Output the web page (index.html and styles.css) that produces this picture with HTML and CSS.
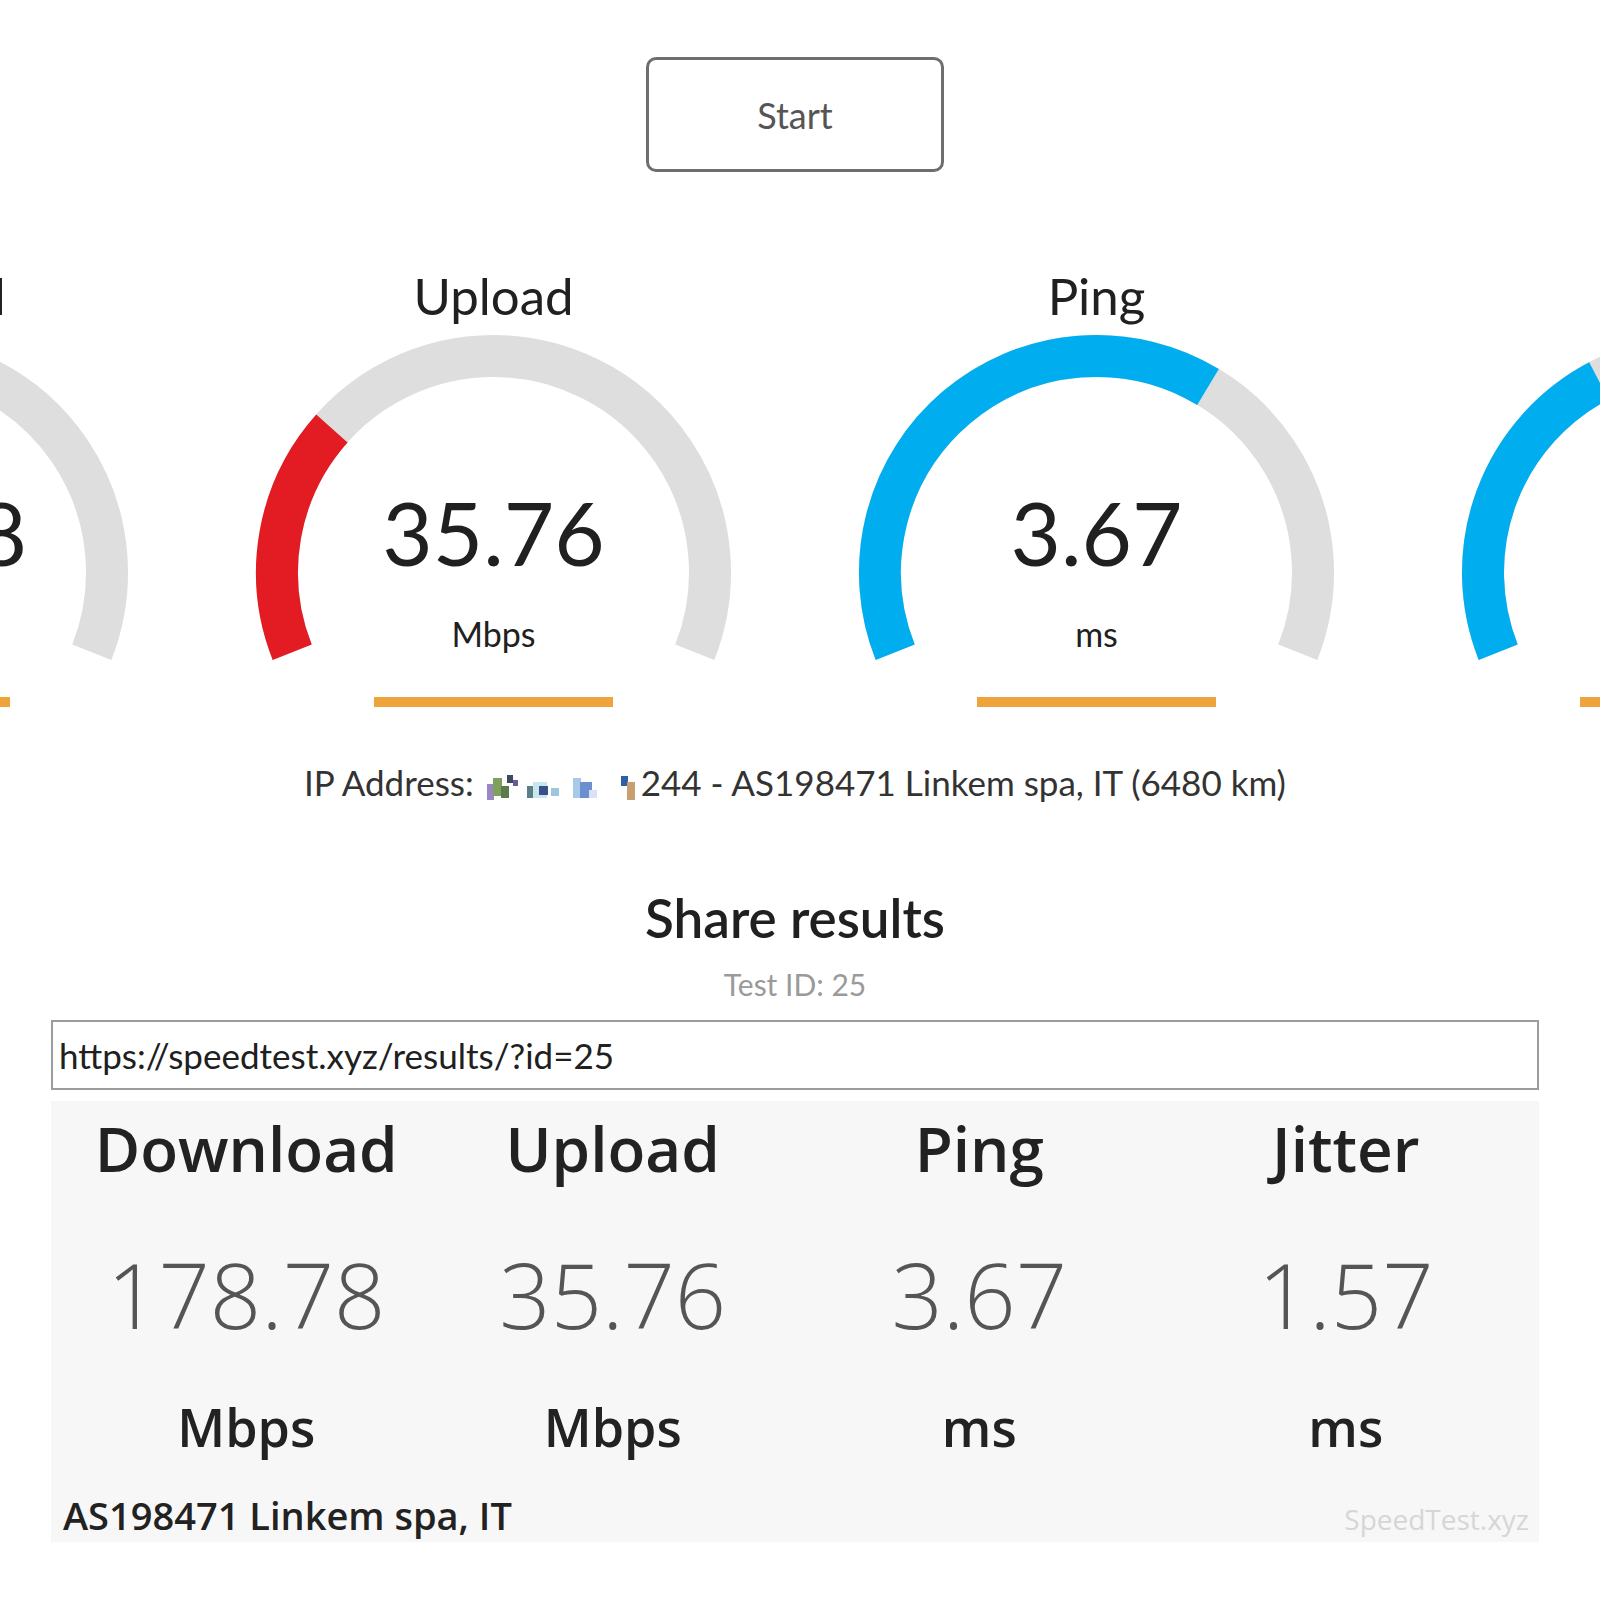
FILE: index.html
```html
<!DOCTYPE html>
<html lang="en">
<head>
    <meta charset="UTF-8">
    <meta name="viewport" content="width=device-width, initial-scale=1.0">
    <title>SpeedTest.xyz</title>
    <link rel="stylesheet" href="styles.css">
</head>
<body>
    <div class="page">
        <div class="start-row">
            <button class="start-button" aria-label="Start test">Start</button>
        </div>

        <!-- meters: wider than the page, overflow on both sides -->
        <div class="meters">
            <div class="meter-box">
                <div class="meter-label">Download</div>
                <div class="meter">
                    <svg class="meter-svg" width="603" height="390" viewBox="0 0 603 390">
                        <path class="arc-bg" d="M 100.2 326.2 A 216.5 216.5 0 1 1 502.8 326.2"/>
                        <path class="arc-blue" d="M 100.2 326.2 A 216.5 216.5 0 0 1 343.4 34.1"/>
                        <rect class="meter-progress" x="182" y="371" width="239" height="10"/>
                    </svg>
                    <div class="meter-value">178.78</div>
                    <div class="meter-unit">Mbps</div>
                </div>
            </div>
            <div class="meter-box">
                <div class="meter-label">Upload</div>
                <div class="meter">
                    <svg class="meter-svg" width="603" height="390" viewBox="0 0 603 390">
                        <path class="arc-bg" d="M 100.2 326.2 A 216.5 216.5 0 1 1 502.8 326.2"/>
                        <path class="arc-red" d="M 100.2 326.2 A 216.5 216.5 0 0 1 139.9 102.4"/>
                        <rect class="meter-progress" x="182" y="371" width="239" height="10"/>
                    </svg>
                    <div class="meter-value">35.76</div>
                    <div class="meter-unit">Mbps</div>
                </div>
            </div>
            <div class="meter-box">
                <div class="meter-label">Ping</div>
                <div class="meter">
                    <svg class="meter-svg" width="603" height="390" viewBox="0 0 603 390">
                        <path class="arc-bg" d="M 100.2 326.2 A 216.5 216.5 0 1 1 502.8 326.2"/>
                        <path class="arc-blue" d="M 100.2 326.2 A 216.5 216.5 0 0 1 413.0 60.9"/>
                        <rect class="meter-progress" x="182" y="371" width="239" height="10"/>
                    </svg>
                    <div class="meter-value">3.67</div>
                    <div class="meter-unit">ms</div>
                </div>
            </div>
            <div class="meter-box">
                <div class="meter-label">Jitter</div>
                <div class="meter">
                    <svg class="meter-svg" width="603" height="390" viewBox="0 0 603 390">
                        <path class="arc-bg" d="M 100.2 326.2 A 216.5 216.5 0 1 1 502.8 326.2"/>
                        <path class="arc-blue" d="M 100.2 326.2 A 216.5 216.5 0 0 1 200.9 54.8"/>
                        <rect class="meter-progress" x="182" y="371" width="239" height="10"/>
                    </svg>
                    <div class="meter-value">1.57</div>
                    <div class="meter-unit">ms</div>
                </div>
            </div>
        </div>

        <div class="ip-info">
            IP Address: <svg class="ip-mask" width="158" height="30" viewBox="0 0 158 30" aria-hidden="true">
                <rect x="4" y="12" width="7" height="16" fill="#9a86c4"/>
                <rect x="10" y="6" width="9" height="18" fill="#7fa05a"/>
                <rect x="18" y="14" width="8" height="12" fill="#5c7a4a"/>
                <rect x="24" y="3" width="6" height="8" fill="#3c4a5c"/>
                <rect x="30" y="8" width="5" height="6" fill="#6a5a9a"/>
                <rect x="44" y="14" width="7" height="12" fill="#5a7f86"/>
                <rect x="50" y="10" width="14" height="16" fill="#c6e6f0"/>
                <rect x="56" y="14" width="9" height="9" fill="#3a4f8a"/>
                <rect x="68" y="16" width="8" height="8" fill="#9ac8dc"/>
                <rect x="90" y="6" width="8" height="20" fill="#a9c9e8"/>
                <rect x="97" y="10" width="12" height="16" fill="#6c8fd0"/>
                <rect x="106" y="18" width="8" height="8" fill="#d8e2f4"/>
                <rect x="138" y="4" width="7" height="10" fill="#2e5fa8"/>
                <rect x="144" y="10" width="8" height="18" fill="#c8a070"/>
            </svg>244 - AS198471 Linkem spa, IT (6480 km)
        </div>

        <div class="share">
            <h3 class="share-title">Share results</h3>
            <div class="test-id">Test ID: 25</div>
            <input class="result-url" type="text" value="https://speedtest.xyz/results/?id=25" readonly>

            <div class="result-card">
                <div class="result-grid">
                    <div class="result-head">Download</div>
                    <div class="result-head">Upload</div>
                    <div class="result-head">Ping</div>
                    <div class="result-head">Jitter</div>

                    <div class="result-value">178.78</div>
                    <div class="result-value">35.76</div>
                    <div class="result-value">3.67</div>
                    <div class="result-value">1.57</div>

                    <div class="result-unit">Mbps</div>
                    <div class="result-unit">Mbps</div>
                    <div class="result-unit">ms</div>
                    <div class="result-unit">ms</div>
                </div>
                <div class="result-footer">
                    <span class="result-isp">AS198471 Linkem spa, IT</span>
                    <span class="result-brand">SpeedTest.xyz</span>
                </div>
            </div>
        </div>
    </div>
</body>
</html>
```

FILE: styles.css
```css
/* Colors */
:root {
    --text-color: #202020;
    --muted-color: #555555;
    --arc-bg: #dedede;
    --arc-red: #e31b23;
    --arc-blue: #00adee;
    --progress-color: #efa43b;
    --card-bg: #f7f7f7;
}

body {
    margin: 0;
    padding: 0 61px 0 51px;
    background-color: #ffffff;
    color: var(--text-color);
    font-family: 'Lato', 'Open Sans', sans-serif;
    overflow-x: hidden;
}

/* Start button */
.start-row {
    display: flex;
    justify-content: center;
    padding-top: 57px;
}

.start-button {
    width: 298px;
    height: 115px;
    background-color: #ffffff;
    border: 3px solid #6e6e6e;
    border-radius: 10px;
    font-family: 'Lato', sans-serif;
    font-size: 36px;
    color: var(--muted-color);
    cursor: pointer;
}

/* Meters */
.meters {
    display: flex;
    justify-content: center;
    margin-top: 94px;
}

.meter-box {
    flex: 0 0 603px;
    width: 603px;
    text-align: center;
}

.meter-label {
    font-size: 51px;
    line-height: 60px;
    height: 60px;
}

.meter {
    position: relative;
    height: 390px;
}

.meter-svg {
    display: block;
}

.meter-svg path {
    fill: none;
    stroke-width: 42;
}

.arc-bg {
    stroke: var(--arc-bg);
}

.arc-red {
    stroke: var(--arc-red);
}

.arc-blue {
    stroke: var(--arc-blue);
}

.meter-progress {
    fill: var(--progress-color);
}

.meter-value {
    position: absolute;
    top: 163px;
    left: 0;
    width: 100%;
    font-size: 87px;
    line-height: 88px;
}

.meter-unit {
    position: absolute;
    top: 291px;
    left: 0;
    width: 100%;
    font-size: 34px;
    line-height: 34px;
}

/* IP line */
.ip-info {
    margin-top: 46px;
    text-align: center;
    font-size: 35px;
    line-height: 40px;
    color: #333333;
}

.ip-mask {
    vertical-align: -6px;
}

/* Share section */
.share {
    display: flex;
    flex-direction: column;
    align-items: center;
}

.share-title {
    margin: 86px 0 0;
    font-size: 53px;
    font-weight: 600;
    line-height: 60px;
}

.test-id {
    margin-top: 18px;
    font-size: 30px;
    line-height: 36px;
    color: #9a9a9a;
}

.result-url {
    box-sizing: border-box;
    width: 100%;
    height: 70px;
    margin-top: 18px;
    padding: 0 6px;
    border: 2px solid #9c9c9c;
    font-family: 'Lato', sans-serif;
    font-size: 35px;
    color: var(--text-color);
    outline: none;
}

/* Result image */
.result-card {
    box-sizing: border-box;
    width: 100%;
    margin-top: 11px;
    padding: 12px 10px 4px 12px;
    background-color: var(--card-bg);
    font-family: 'Open Sans', sans-serif;
}

.result-grid {
    display: grid;
    grid-template-columns: repeat(4, 1fr);
    text-align: center;
}

.result-head {
    font-size: 62px;
    font-weight: 600;
    line-height: 70px;
    color: #222222;
}

.result-value {
    margin-top: 61px;
    font-size: 90px;
    font-weight: 300;
    line-height: 100px;
    color: #555555;
}

.result-unit {
    margin-top: 51px;
    font-size: 52px;
    font-weight: 600;
    line-height: 64px;
    color: #222222;
}

.result-footer {
    display: flex;
    justify-content: space-between;
    align-items: baseline;
    margin-top: 33px;
}

.result-isp {
    font-size: 38px;
    font-weight: 600;
    line-height: 46px;
    color: #222222;
}

.result-brand {
    font-size: 28px;
    color: #d6d6d6;
}
```
